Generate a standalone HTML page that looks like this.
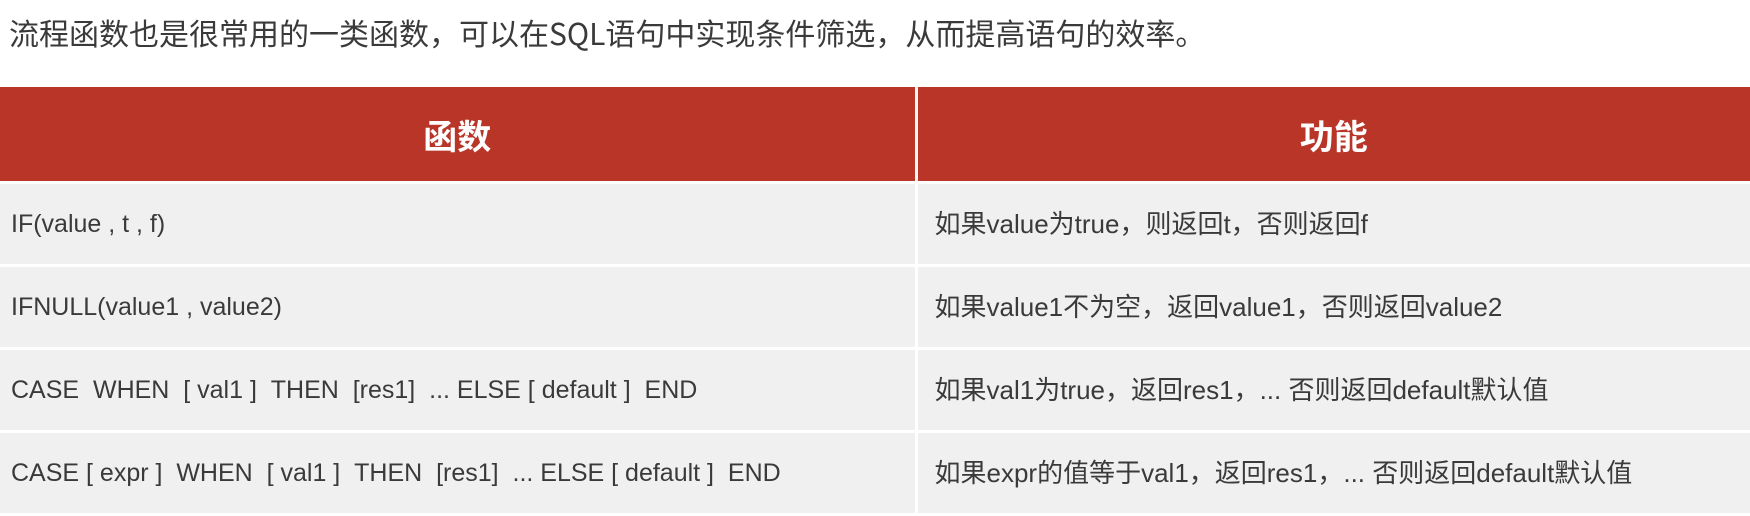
<!DOCTYPE html>
<html><head><meta charset="utf-8"><style>
html,body{margin:0;padding:0;background:#fff;width:1750px;height:489px;overflow:hidden}
body{font-family:"Liberation Sans","Noto Sans CJK SC",sans-serif;color:#333}
.title{position:absolute;left:9px;top:11px;font-size:30px;line-height:42px;color:#3a3a3a;font-family:"Noto Sans CJK SC",sans-serif}
table{position:absolute;left:0;top:87px;width:1750px;border-collapse:collapse;table-layout:fixed}
th{background:#b83527;color:#fff;height:94px;font-size:34px;font-weight:bold;font-family:"Noto Sans CJK SC",sans-serif;border-right:3px solid #f4f4f4;border-bottom:3px solid #fff;padding:0}
th:last-child{border-right:none}
td{background:#f1f0f1;height:80px;color:#3a3a3a;border-bottom:3px solid #fff;border-right:3px solid #fff;padding:0;line-height:30px}
td:last-child{border-right:none}
td.a{padding-left:11px;font-size:25px;font-family:"Liberation Sans",sans-serif}
td.b{padding-left:17px;font-size:26px;font-family:"Liberation Sans","Noto Sans CJK SC",sans-serif}
</style></head><body>
<div class="title">流程函数也是很常用的一类函数，可以在SQL语句中实现条件筛选，从而提高语句的效率。</div>
<table>
<colgroup><col style="width:916px"><col></colgroup>
<tr><th>函数</th><th>功能</th></tr>
<tr><td class="a">IF(value , t , f)</td><td class="b">如果value为true，则返回t，否则返回f</td></tr>
<tr><td class="a">IFNULL(value1 , value2)</td><td class="b">如果value1不为空，返回value1，否则返回value2</td></tr>
<tr><td class="a">CASE &nbsp;WHEN &nbsp;[ val1 ] &nbsp;THEN &nbsp;[res1] &nbsp;... ELSE [ default ] &nbsp;END</td><td class="b">如果val1为true，返回res1，... 否则返回default默认值</td></tr>
<tr><td class="a">CASE [ expr ] &nbsp;WHEN &nbsp;[ val1 ] &nbsp;THEN &nbsp;[res1] &nbsp;... ELSE [ default ] &nbsp;END</td><td class="b">如果expr的值等于val1，返回res1，... 否则返回default默认值</td></tr>
</table>
</body></html>
